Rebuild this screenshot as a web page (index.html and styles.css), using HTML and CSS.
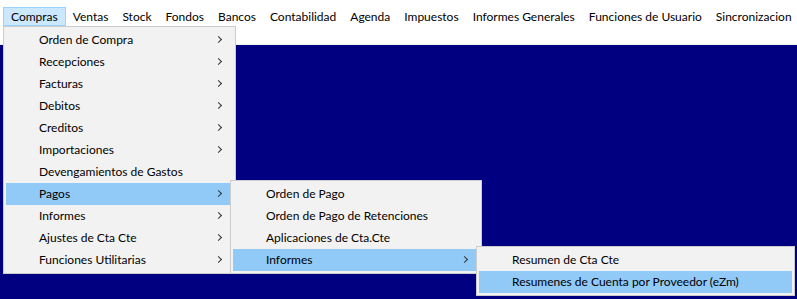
FILE: index.html
```html
<!DOCTYPE html>
<html lang="es">
<head>
    <meta charset="UTF-8">
    <title>Compras</title>
    <link rel="stylesheet" href="styles.css">
</head>
<body>
    <div class="app">
        <nav class="menubar">
            <span class="menubar-item active">Compras</span>
            <span class="menubar-item">Ventas</span>
            <span class="menubar-item">Stock</span>
            <span class="menubar-item">Fondos</span>
            <span class="menubar-item">Bancos</span>
            <span class="menubar-item">Contabilidad</span>
            <span class="menubar-item">Agenda</span>
            <span class="menubar-item">Impuestos</span>
            <span class="menubar-item">Informes Generales</span>
            <span class="menubar-item">Funciones de Usuario</span>
            <span class="menubar-item">Sincronizacion</span>
        </nav>
        <div class="toolbar"></div>
        <div class="desktop"></div>

        <!-- Compras dropdown -->
        <ul class="menu menu-compras">
            <li class="menu-item has-sub">Orden de Compra</li>
            <li class="menu-item has-sub">Recepciones</li>
            <li class="menu-item has-sub">Facturas</li>
            <li class="menu-item has-sub">Debitos</li>
            <li class="menu-item has-sub">Creditos</li>
            <li class="menu-item has-sub">Importaciones</li>
            <li class="menu-item">Devengamientos de Gastos</li>
            <li class="menu-item has-sub selected">Pagos</li>
            <li class="menu-item has-sub">Informes</li>
            <li class="menu-item has-sub">Ajustes de Cta Cte</li>
            <li class="menu-item has-sub">Funciones Utilitarias</li>
        </ul>

        <!-- Pagos submenu -->
        <ul class="menu menu-pagos">
            <li class="menu-item">Orden de Pago</li>
            <li class="menu-item">Orden de Pago de Retenciones</li>
            <li class="menu-item">Aplicaciones de Cta.Cte</li>
            <li class="menu-item has-sub selected">Informes</li>
        </ul>

        <!-- Informes submenu -->
        <ul class="menu menu-informes">
            <li class="menu-item">Resumen de Cta Cte</li>
            <li class="menu-item selected">Resumenes de Cuenta por Proveedor (eZm)</li>
        </ul>
    </div>
</body>
</html>
```

FILE: styles.css
```css
:root {
    --menu-bg: #f2f2f2;
    --menu-border: #cccccc;
    --hover: #91c9f7;
    --desktop: #000080;
}

body {
    margin: 0;
    font-family: 'Segoe UI', Lato, 'Noto Sans', sans-serif;
    font-size: 12px;
    color: #000;
    background: #fff;
}

.app {
    position: relative;
    width: 797px;
    height: 299px;
    overflow: hidden;
    display: flex;
    flex-direction: column;
}

.menubar {
    display: flex;
    padding: 7px 0 0 3px;
    height: 19px;
    background: #fff;
}

.menubar-item {
    box-sizing: border-box;
    height: 19px;
    line-height: 17px;
    padding: 0 6px;
    border: 1px solid transparent;
    white-space: nowrap;
}

.menubar-item.active {
    padding: 0 7px;
    background: #cce8ff;
    border-color: #99d1ff;
}

.toolbar {
    height: 18px;
    background: #fff;
    border-bottom: 1px solid #f0f0f0;
}

.desktop {
    flex: 1;
    background: var(--desktop);
}

/* Dropdown menus */
.menu {
    position: absolute;
    margin: 0;
    padding: 2px;
    list-style: none;
    background: var(--menu-bg);
    border: 1px solid var(--menu-border);
}

.menu-compras { left: 3px; top: 26px; width: 227px; }
.menu-pagos { left: 230px; top: 180px; width: 246px; }
.menu-informes { left: 476px; top: 246px; width: 313px; }

.menu-item {
    position: relative;
    height: 22px;
    line-height: 22px;
    padding-left: 33px;
    white-space: nowrap;
}

.menu-item.selected {
    background: var(--hover);
}

.menu-item.has-sub::after {
    content: '';
    position: absolute;
    right: 12px;
    top: 8px;
    width: 4px;
    height: 4px;
    border-right: 1px solid #333;
    border-bottom: 1px solid #333;
    transform: rotate(-45deg);
}
```
